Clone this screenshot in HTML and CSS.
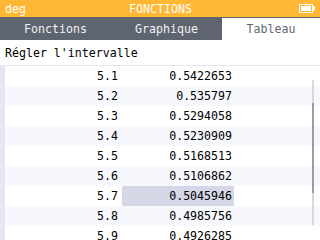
FILE: index.html
```html
<!DOCTYPE html>
<html lang="fr">
<head>
    <meta charset="UTF-8">
    <title>Fonctions - Tableau</title>
    <link rel="stylesheet" href="styles.css">
</head>
<body>
    <div class="screen">
        <div class="titlebar">
            <span class="unit">deg</span>
            <span class="title">FONCTIONS</span>
            <span class="battery">
                <svg width="17" height="9" viewBox="0 0 17 9">
                    <rect x="0.5" y="0.5" width="13" height="8" fill="none" stroke="#fff"/>
                    <rect x="2" y="2" width="10" height="5" fill="#fff"/>
                    <rect x="14" y="2.5" width="2" height="4" fill="#fff"/>
                </svg>
            </span>
        </div>
        <div class="tabs">
            <div class="tab">Fonctions</div>
            <div class="tab">Graphique</div>
            <div class="tab active">Tableau</div>
        </div>
        <div class="range-button">Régler l'intervalle</div>
        <div class="table-area">
            <div class="table" id="table"></div>
            <div class="scrollbar"><div class="thumb"></div></div>
        </div>
    </div>

    <script>
        // values of the table, x then f(x)
        const rows = [
            ['5.1', '0.5422653'],
            ['5.2', '0.535797'],
            ['5.3', '0.5294058'],
            ['5.4', '0.5230909'],
            ['5.5', '0.5168513'],
            ['5.6', '0.5106862'],
            ['5.7', '0.5045946'],
            ['5.8', '0.4985756'],
            ['5.9', '0.4926285']
        ];
        const selected = 6;
        const table = document.getElementById('table');
        rows.forEach(function (r, i) {
            const row = document.createElement('div');
            row.className = 'row' + (i % 2 ? ' odd' : '');
            const x = document.createElement('div');
            x.className = 'cell x';
            x.textContent = r[0];
            const y = document.createElement('div');
            y.className = 'cell y' + (i === selected ? ' selected' : '');
            y.textContent = r[1];
            row.appendChild(x);
            row.appendChild(y);
            table.appendChild(row);
        });
    </script>
</body>
</html>
```

FILE: styles.css
```css
body {
    margin: 0;
    font-family: 'DejaVu Sans Mono', 'Liberation Mono', monospace;
    font-size: 11.6px;
    background-color: #fff;
}
.screen {
    width: 320px;
    height: 240px;
    overflow: hidden;
    display: flex;
    flex-direction: column;
}
.titlebar {
    height: 17px;
    flex-shrink: 0;
    background-color: #ffb734;
    color: #fff;
    display: grid;
    grid-template-columns: 1fr auto 1fr;
    align-items: center;
    padding: 0 4px 0 5px;
}
.titlebar .battery {
    justify-self: end;
    display: flex;
}
.tabs {
    height: 23px;
    flex-shrink: 0;
    background-color: #5f6570;
    display: grid;
    grid-template-columns: 111px 111px 1fr;
    padding-top: 1px;
    box-sizing: border-box;
}
.tab {
    display: flex;
    align-items: center;
    justify-content: center;
    color: #f2f2f2;
}
.tab.active {
    background-color: #fff;
    color: #5f6570;
}
.range-button {
    height: 25px;
    flex-shrink: 0;
    display: flex;
    align-items: center;
    padding-left: 5px;
    color: #000;
}
.table-area {
    flex: 1;
    position: relative;
    background-color: #e5e6ef;
    padding: 1px 0 0 5px;
}
.table {
    display: flex;
    flex-direction: column;
}
.row {
    display: grid;
    grid-template-columns: 117px 112px;
    height: 20px;
    flex-shrink: 0;
    background-color: #fff;
}
.row.odd {
    background-color: #f6f8fe;
}
.cell {
    display: flex;
    align-items: center;
    justify-content: flex-end;
    color: #000;
}
.cell.x {
    padding-right: 4px;
}
.cell.y {
    padding-right: 2px;
}
.cell.selected {
    background-color: #d5d7e6;
}
.scrollbar {
    position: absolute;
    left: 312px;
    top: 15px;
    width: 2px;
    height: 145px;
    background-color: #d6d7df;
}
.scrollbar .thumb {
    margin-top: 23px;
    height: 90px;
    background-color: #9a9ca6;
}
```
